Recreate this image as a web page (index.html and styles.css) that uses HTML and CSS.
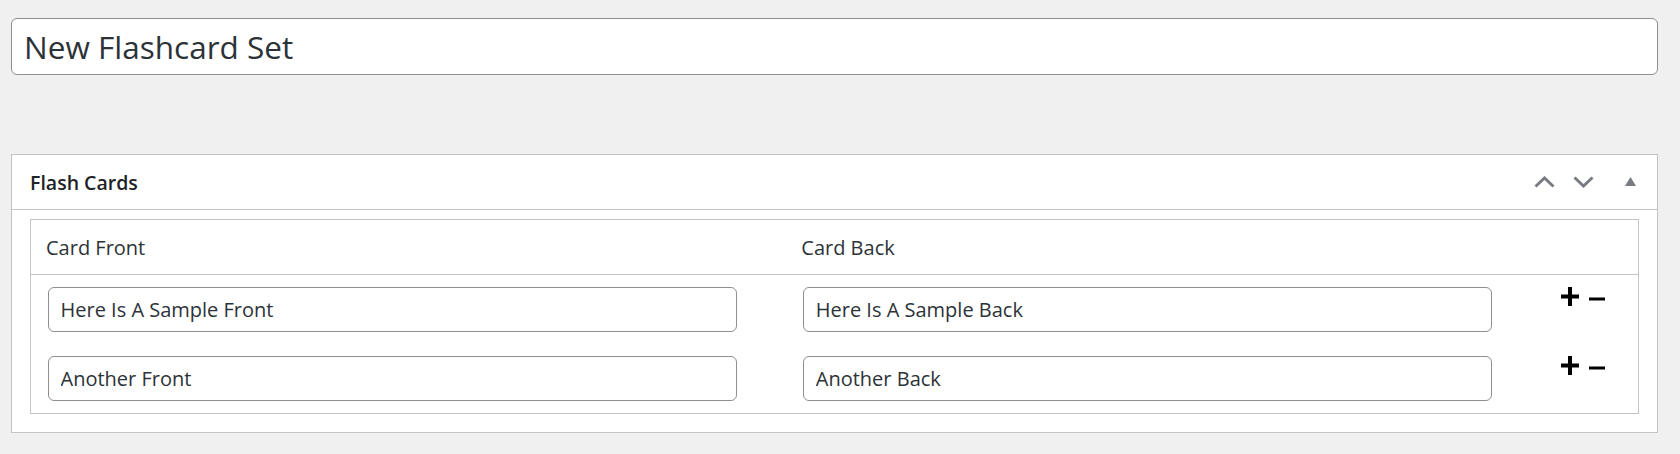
FILE: index.html
```html
<!DOCTYPE html>
<html lang="en">
<head>
<meta charset="utf-8">
<title>New Flashcard Set</title>
<link rel="stylesheet" href="styles.css">
</head>
<body>
  <div class="title-wrap">
    <input class="title-input" type="text" value="New Flashcard Set">
  </div>

  <div class="postbox">
    <div class="postbox-header">
      <h2 class="hndle">Flash Cards</h2>
      <div class="handle-actions">
        <svg class="chev chev-up" width="21" height="12" viewBox="0 0 21 12"><polyline points="1.5,10.5 10.5,2 19.5,10.5" fill="none" stroke="#787c82" stroke-width="3"/></svg>
        <svg class="chev chev-down" width="21" height="12" viewBox="0 0 21 12"><polyline points="1.5,1.5 10.5,10 19.5,1.5" fill="none" stroke="#787c82" stroke-width="3"/></svg>
        <svg class="toggle" width="11" height="9" viewBox="0 0 11 9"><polygon points="5.5,0 11,9 0,9" fill="#787c82"/></svg>
      </div>
    </div>
    <div class="inside">
      <div class="cards-table">
        <div class="row head">
          <div class="cell th">Card Front</div>
          <div class="cell th">Card Back</div>
          <div class="cell th"></div>
        </div>
        <div class="row">
          <div class="cell"><input class="card-input" type="text" value="Here Is A Sample Front"></div>
          <div class="cell"><input class="card-input" type="text" value="Here Is A Sample Back"></div>
          <div class="cell actions">
            <svg width="45" height="19" viewBox="0 0 45 19"><rect x="0" y="7.5" width="18" height="4" fill="#000"/><rect x="7" y="0" width="4" height="19" fill="#000"/><rect x="28" y="10.5" width="16" height="3" fill="#000"/></svg>
          </div>
        </div>
        <div class="row">
          <div class="cell"><input class="card-input" type="text" value="Another Front"></div>
          <div class="cell"><input class="card-input" type="text" value="Another Back"></div>
          <div class="cell actions">
            <svg width="45" height="19" viewBox="0 0 45 19"><rect x="0" y="7.5" width="18" height="4" fill="#000"/><rect x="7" y="0" width="4" height="19" fill="#000"/><rect x="28" y="10.5" width="16" height="3" fill="#000"/></svg>
          </div>
        </div>
      </div>
    </div>
  </div>
</body>
</html>
```
FILE: styles.css
```css
* { box-sizing: border-box; }
html, body { margin: 0; }
body {
  background: #f0f0f1;
  font-family: "Open Sans", "Noto Sans", sans-serif;
  color: #2c3338;
  padding: 18px 22px 0 11px;
}
.title-wrap { display: block; }
.title-input {
  display: block;
  width: 100%;
  height: 57px;
  margin: 0;
  padding: 0 12px;
  border: 1px solid #8c8f94;
  border-radius: 6px;
  background: #fff;
  font-family: inherit;
  font-size: 31.5px;
  color: #2c3338;
  outline: none;
}
.postbox {
  margin-top: 79px;
  background: #fff;
  border: 1px solid #c3c4c7;
}
.postbox-header {
  display: flex;
  align-items: center;
  height: 55px;
  border-bottom: 1px solid #c3c4c7;
  padding: 0 21px 0 18px;
}
.hndle {
  flex: 1;
  margin: 0;
  font-size: 19.5px;
  font-weight: 600;
  color: #1d2327;
}
.handle-actions {
  display: flex;
  align-items: center;
}
.chev { display: block; }
.chev-down { margin-left: 18px; }
.toggle { display: block; margin-left: 31px; margin-top: -1px; }
.inside {
  padding: 9px 18px 18px 18px;
}
.cards-table {
  border: 1px solid #c3c4c7;
}
.row {
  display: grid;
  grid-template-columns: 47% 47% 1fr;
}
.row.head {
  height: 55px;
  border-bottom: 1px solid #c3c4c7;
  align-items: center;
}
.cell {
  padding: 12px 15px;
}
.th {
  padding: 0 15px;
  font-size: 20px;
  color: #2c3338;
}
.card-input {
  display: block;
  width: 95%;
  height: 45px;
  margin: 0 1.5px;
  padding: 0 12px;
  border: 1px solid #8c8f94;
  border-radius: 6px;
  background: #fff;
  font-family: inherit;
  font-size: 20px;
  color: #2c3338;
  outline: none;
}
.actions { padding-left: 19px; }
.actions svg { display: block; }
```
